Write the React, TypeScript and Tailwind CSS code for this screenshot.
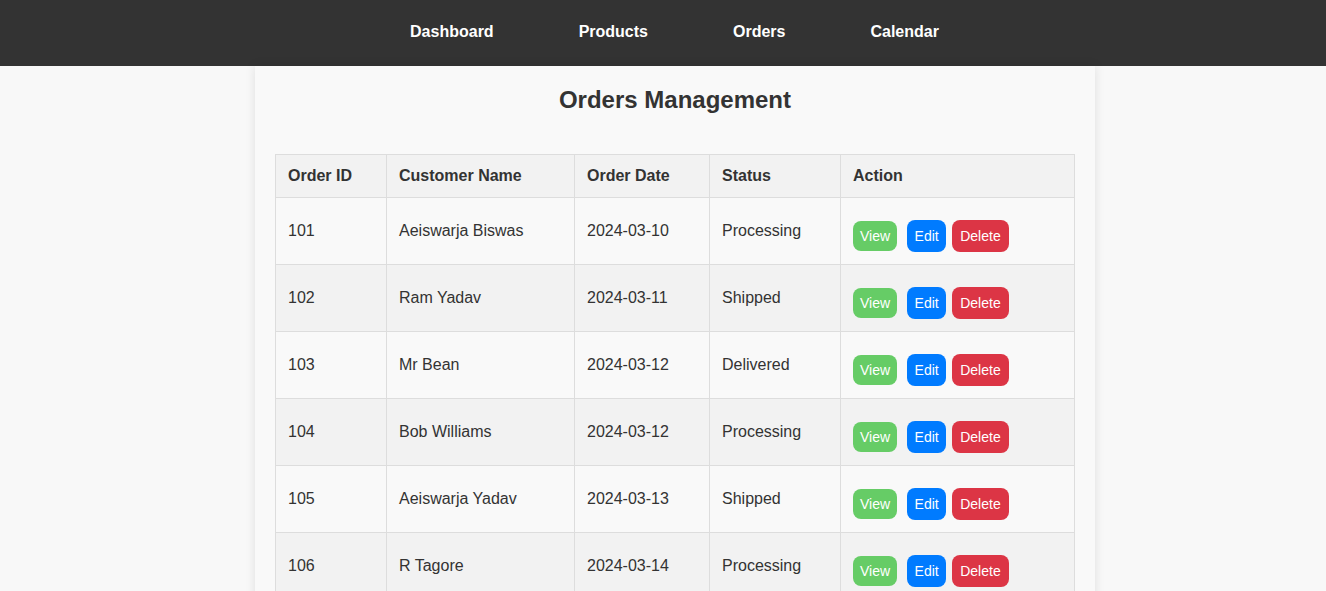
import React from "react";

const orders = [
  { id: "101", name: "Aeiswarja Biswas", date: "2024-03-10", status: "Processing" },
  { id: "102", name: "Ram Yadav", date: "2024-03-11", status: "Shipped" },
  { id: "103", name: "Mr Bean", date: "2024-03-12", status: "Delivered" },
  { id: "104", name: "Bob Williams", date: "2024-03-12", status: "Processing" },
  { id: "105", name: "Aeiswarja Yadav", date: "2024-03-13", status: "Shipped" },
  { id: "106", name: "R Tagore", date: "2024-03-14", status: "Processing" },
];

export default function App() {
  return (
    <div
      className="min-h-screen bg-[#f8f8f8] text-[#333]"
      style={{ fontFamily: '"Liberation Sans", Arial, sans-serif' }}
    >
      <nav className="h-[66px] bg-[#333333] flex items-center justify-center pl-[23px] pb-[2px] gap-[85px]">
        {["Dashboard", "Products", "Orders", "Calendar"].map((l) => (
          <a key={l} className="text-white font-bold text-[16px] leading-none">
            {l}
          </a>
        ))}
      </nav>
      <div className="pl-[24px]">
        <div className="w-[840px] mx-auto bg-[#f9f9f9] shadow-[0_0_10px_rgba(0,0,0,0.1)] px-[20px] pt-[20px] pb-[20px]">
          <h1 className="text-[24px] font-bold text-center leading-[28px] mt-0 mb-[40px] text-[#333]">
            Orders Management
          </h1>
          <table className="w-[800px] border-collapse text-[16px]">
            <thead>
              <tr className="bg-[#f2f2f2]">
                <th className="w-[111px] border border-[#dddddd] px-[12px] h-[43px] text-left font-bold">Order ID</th>
                <th className="w-[188px] border border-[#dddddd] px-[12px] h-[43px] text-left font-bold">Customer Name</th>
                <th className="w-[135px] border border-[#dddddd] px-[12px] h-[43px] text-left font-bold">Order Date</th>
                <th className="w-[131px] border border-[#dddddd] px-[12px] h-[43px] text-left font-bold">Status</th>
                <th className="border border-[#dddddd] px-[12px] h-[43px] text-left font-bold">Action</th>
              </tr>
            </thead>
            <tbody>
              {orders.map((o, i) => (
                <tr key={o.id} className={i % 2 === 0 ? "bg-[#f9f9f9]" : "bg-[#f2f2f2]"}>
                  <td className="border border-[#dddddd] px-[12px] h-[67px]">{o.id}</td>
                  <td className="border border-[#dddddd] px-[12px] h-[67px]">{o.name}</td>
                  <td className="border border-[#dddddd] px-[12px] h-[67px]">{o.date}</td>
                  <td className="border border-[#dddddd] px-[12px] h-[67px]">{o.status}</td>
                  <td className="border border-[#dddddd] px-[12px] h-[67px]">
                    <div className="flex items-center pt-[10px]">
                      <button className="h-[30px] px-[7px] rounded-[8px] bg-[#66cc66] text-white text-[14px] mr-[10px]">
                        View
                      </button>
                      <button className="h-[32px] px-[7.5px] rounded-[8px] bg-[#007bff] text-white text-[14px] mr-[6px]">
                        Edit
                      </button>
                      <button className="h-[32px] px-[8px] rounded-[8px] bg-[#dc3545] text-white text-[14px]">
                        Delete
                      </button>
                    </div>
                  </td>
                </tr>
              ))}
            </tbody>
          </table>
        </div>
      </div>
    </div>
  );
}
